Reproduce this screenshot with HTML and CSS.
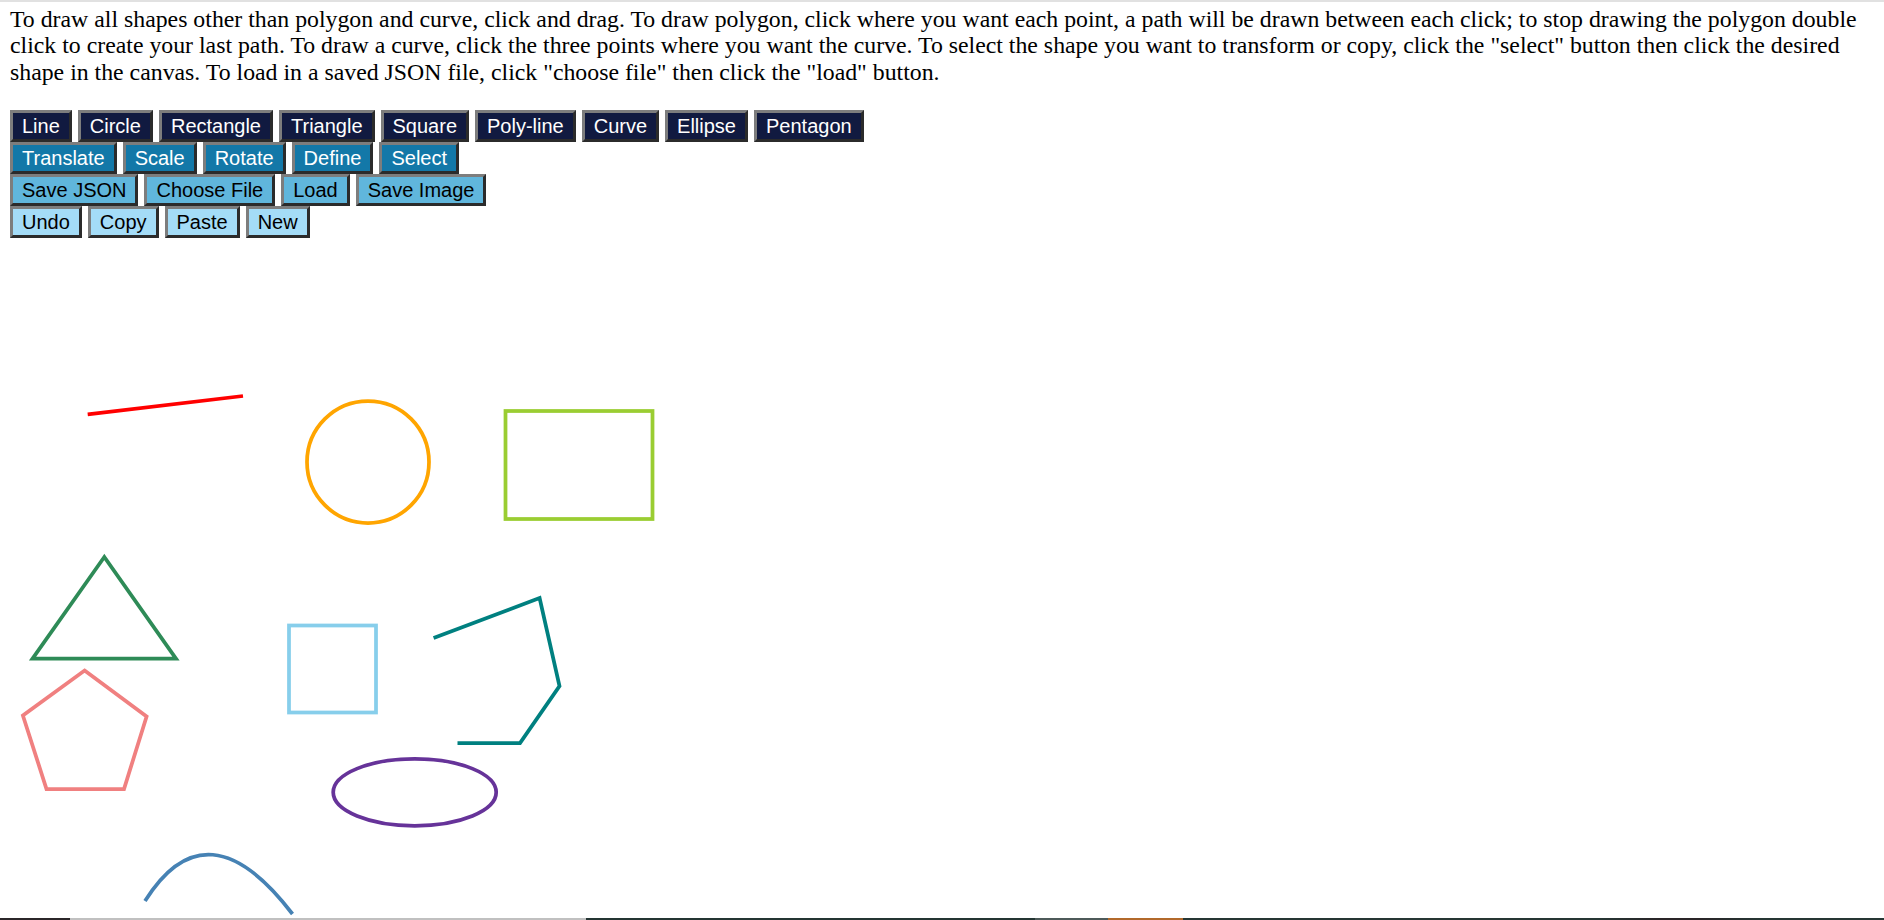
FILE: index.html
```html
<!DOCTYPE html>
<html lang="en">
<head>
<meta charset="utf-8">
<title>Shapes</title>
<link rel="stylesheet" href="styles.css">
</head>
<body>
<div class="topline"></div>
<main class="page">
  <p class="intro">To draw all shapes other than polygon and curve, click and drag. To draw polygon, click where you want each point, a path will be drawn between each click; to stop drawing the polygon double click to create your last path. To draw a curve, click the three points where you want the curve. To select the shape you want to transform or copy, click the "select" button then click the desired shape in the canvas. To load in a saved JSON file, click "choose file" then click the "load" button.</p>
  <div class="toolbar">
    <div class="row row-draw">
      <button class="btn">Line</button>
      <button class="btn">Circle</button>
      <button class="btn">Rectangle</button>
      <button class="btn">Triangle</button>
      <button class="btn">Square</button>
      <button class="btn">Poly-line</button>
      <button class="btn">Curve</button>
      <button class="btn">Ellipse</button>
      <button class="btn">Pentagon</button>
    </div>
    <div class="row row-transform">
      <button class="btn">Translate</button>
      <button class="btn">Scale</button>
      <button class="btn">Rotate</button>
      <button class="btn">Define</button>
      <button class="btn">Select</button>
    </div>
    <div class="row row-file">
      <button class="btn">Save JSON</button>
      <button class="btn">Choose File</button>
      <button class="btn">Load</button>
      <button class="btn">Save Image</button>
    </div>
    <div class="row row-edit">
      <button class="btn">Undo</button>
      <button class="btn">Copy</button>
      <button class="btn">Paste</button>
      <button class="btn">New</button>
    </div>
  </div>
  <svg class="canvas" viewBox="10 240 1864 678" width="1864" height="678" xmlns="http://www.w3.org/2000/svg">
    <g fill="none" stroke-width="3.75">
      <line x1="87.7" y1="414.4" x2="243" y2="396" stroke="#ff0000"/>
      <circle cx="368" cy="462" r="61" stroke="#ffa500"/>
      <rect x="505.5" y="411" width="147" height="108" stroke="#9acd32"/>
      <polygon points="104.3,557 32.5,658.7 176,658.7" stroke="#2e8b57"/>
      <rect x="289" y="625.5" width="87" height="87" stroke="#87ceeb"/>
      <polyline points="433.6,638 539.6,598 559.5,686 520,743 457.5,743" stroke="#008080"/>
      <polygon points="84.6,670.5 146.6,716.5 124,789 46.5,789 22.9,715.5" stroke="#f08080"/>
      <ellipse cx="414.7" cy="792.3" rx="81.5" ry="33.5" stroke="#663399"/>
      <path d="M145 901 Q207 802 292.5 914" stroke="#4682b4"/>
    </g>
  </svg>
</main>
<div class="taskbar"></div>
</body>
</html>
```
FILE: styles.css
```css
html, body {
  margin: 0;
  padding: 0;
  background: #ffffff;
  overflow: hidden;
}

body {
  height: 920px;
  font-family: "Liberation Serif", "Times New Roman", serif;
  color: #000;
}

.topline {
  height: 2px;
  background: #e1e1e1;
}

.page {
  padding: 0 10px;
}

.intro {
  margin: 3.5px 0 25px;
  font-size: 23.8px;
  line-height: 26.5px;
}

.toolbar {
  display: flex;
  flex-direction: column;
}

.row {
  display: flex;
  gap: 6px;
}

.btn {
  font-family: "Liberation Sans", Arial, sans-serif;
  font-size: 20px;
  line-height: 22px;
  height: 32px;
  padding: 2px 9px;
  margin: 0;
  border-style: solid;
  border-width: 3px;
  border-color: #7d7d7d #2b2b2b #2b2b2b #7d7d7d;
  cursor: pointer;
}

.row-draw .btn {
  background: #111a40;
  color: #ffffff;
}

.row-transform .btn {
  background: #1378a8;
  color: #ffffff;
}

.row-file .btn {
  background: #60b6dc;
  color: #000000;
}

.row-edit .btn {
  background: #a4dcf7;
  color: #000000;
}

.canvas {
  display: block;
  margin-top: 2px;
}

.taskbar {
  position: fixed;
  left: 0;
  right: 0;
  bottom: 0;
  height: 2px;
  background: linear-gradient(to right,
    #2b2629 0, #2b2629 70px,
    #c0c0c0 70px, #c0c0c0 586px,
    #243533 586px, #243533 1035px,
    #4e5a59 1035px, #4e5a59 1108px,
    #b2692b 1108px, #b2692b 1183px,
    #263634 1183px, #263634 1600px,
    #2a2528 1660px, #2a2528 1700px,
    #263634 1760px, #263634 100%);
}
```
